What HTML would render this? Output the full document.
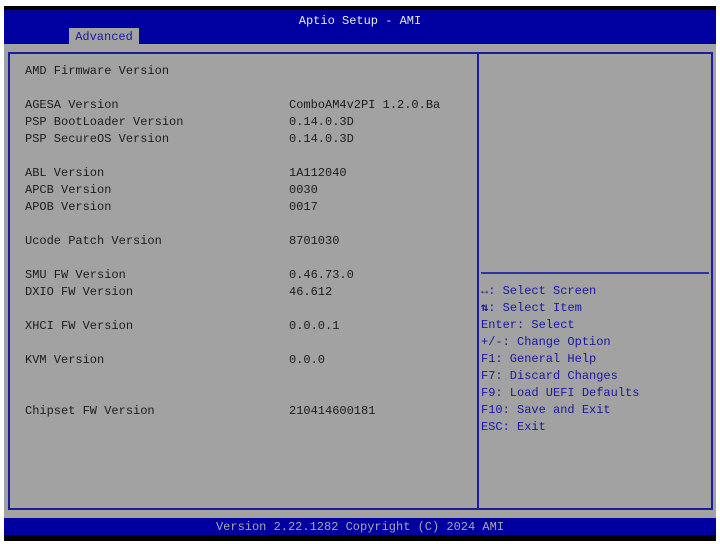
<!DOCTYPE html>
<html><head><meta charset="utf-8"><style>
*{margin:0;padding:0;box-sizing:border-box}
body{width:720px;height:544px;background:#fff;position:relative;overflow:hidden;font-family:"Liberation Mono",monospace;font-size:12px;}
.a{position:absolute;white-space:pre;line-height:17px}
#scr{position:absolute;left:4px;top:6px;width:712px;height:535px;background:#000}
#hdr{position:absolute;left:4px;top:10px;width:712px;height:34px;background:#0000a0}
#body{position:absolute;left:4px;top:44px;width:712px;height:474px;background:#a2a2a2}
#ftr{position:absolute;left:4px;top:518px;width:712px;height:17px;background:#0000a0}
#frame{position:absolute;left:8px;top:52px;width:705px;height:458px;border:2px solid #1c1ca0}
#div{position:absolute;left:477px;top:52px;width:2px;height:458px;background:#1c1ca0}
#sep{position:absolute;left:481px;top:272px;width:228px;height:2px;background:#3030a8}
#tab{position:absolute;left:69px;top:28px;width:70px;height:16px;background:#a2a2a2;color:#1818a0;text-align:center;line-height:17px;padding-top:1px}
.t{color:#1c1c1c}
.h{color:#1818a0}
</style></head><body>
<div id="scr"></div><div id="hdr"></div><div id="body"></div><div id="ftr"></div>
<div id="frame"></div><div id="div"></div><div id="sep"></div>
<div id="tab">Advanced</div>
<div class="a" style="left:0;width:720px;text-align:center;top:13px;color:#e8e8e8">Aptio Setup - AMI</div>
<div class="a" style="left:0;width:720px;text-align:center;top:519px;color:#a8a8a8">Version 2.22.1282 Copyright (C) 2024 AMI</div>
<div class="a t" style="left:25px;top:63px">AMD Firmware Version</div>
<div class="a t" style="left:25px;top:97px">AGESA Version
PSP BootLoader Version
PSP SecureOS Version

ABL Version
APCB Version
APOB Version

Ucode Patch Version

SMU FW Version
DXIO FW Version

XHCI FW Version

KVM Version


Chipset FW Version</div>
<div class="a t" style="left:289px;top:97px">ComboAM4v2PI 1.2.0.Ba
0.14.0.3D
0.14.0.3D

1A112040
0030
0017

8701030

0.46.73.0
46.612

0.0.0.1

0.0.0


210414600181</div>
<div class="a h" style="left:481px;top:283px"><b>↔</b>: Select Screen
<b>⇅</b>: Select Item
Enter: Select
+/-: Change Option
F1: General Help
F7: Discard Changes
F9: Load UEFI Defaults
F10: Save and Exit
ESC: Exit</div>
</body></html>
